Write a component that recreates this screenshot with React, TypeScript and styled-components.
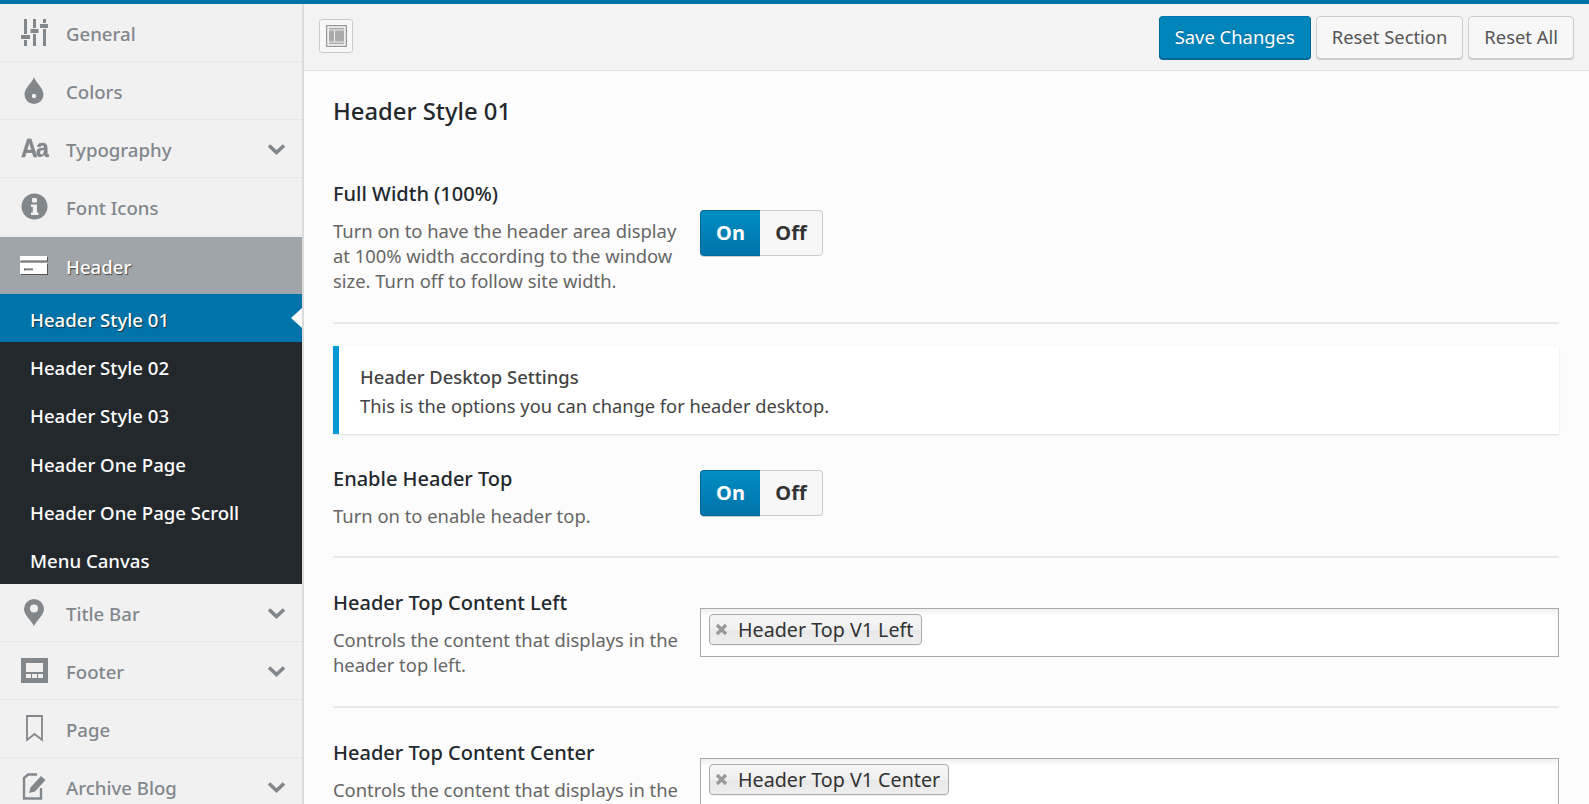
import React from "react";
import styled, { createGlobalStyle } from "styled-components";

const GlobalStyle = createGlobalStyle`
  html, body {
    margin: 0;
    padding: 0;
    height: 100%;
    overflow: hidden;
    background: #fcfcfc;
  }
  * {
    box-sizing: border-box;
  }
  #root {
    height: 100%;
  }
`;

const font = `"Noto Sans", "Open Sans", sans-serif`;

const Chevron = () => (
  <svg width="19" height="12" viewBox="0 0 19 12" fill="none">
    <path d="M2 2.5l7.500 7 7.500-7" stroke="#82878c" strokeWidth="3.6" />
  </svg>
);

const GeneralIcon = () => (
  <svg width="27" height="27" viewBox="0 0 27 27" fill="#82878c">
    <path d="M3 0h3v15H3zM3 21h3v6H3zM0 16h9v4H0zM12 0h3v9h-3zM12 15h3v12h-3zM9.5 10h8v4h-8zM22 0h3v4h-3zM22 10h3v17h-3zM19 5h8v4h-8z" />
  </svg>
);

const DropIcon = () => (
  <svg width="20" height="27" viewBox="0 0 20 27" fill="#82878c">
    <path d="M10 0c1 5 9.500 10.500 9.500 17.500A9.500 9.500 0 0 1 .5 17.500C.5 10.500 9 5 10 0z" />
    <circle cx="10" cy="19" r="2.2" fill="#f1f1f1" />
  </svg>
);

const AaIcon = () => <AaGlyph>Aa</AaGlyph>;

const InfoIcon = () => (
  <svg width="27" height="27" viewBox="0 0 27 27">
    <circle cx="13.5" cy="13.5" r="13" fill="#82878c" />
    <rect x="11" y="5" width="5" height="4.5" rx="1" fill="#f1f1f1" />
    <path d="M10 11.500h6v8h1.500V22h-7.500v-2.500h1.800v-5.500H10z" fill="#f1f1f1" />
  </svg>
);

const HeaderIcon = () => (
  <svg width="28" height="19" viewBox="0 0 28 19" fill="#fff" style={{ filter: "drop-shadow(1px 1px 0 #555)" }}>
    <path d="M0 0h27v4.500H0zM0 7h27v11H0zM4 12.500v2h9v-2z" fillRule="evenodd" />
  </svg>
);

const PinIcon = () => (
  <svg width="20" height="27" viewBox="0 0 20 27">
    <path d="M10 0a10 10 0 0 1 10 10c0 6-7 11-10 17C7 21 0 16 0 10A10 10 0 0 1 10 0z" fill="#82878c" />
    <circle cx="10" cy="9.5" r="4" fill="#f1f1f1" />
  </svg>
);

const FooterIcon = () => (
  <svg width="27" height="25" viewBox="0 0 27 25" fill="#82878c">
    <path
      d="M0 0h27v25H0zM5 5v9h17V5zM5 16v4h5v-4zM11 16v4h5v-4zM17 16v4h5v-4z"
      fillRule="evenodd"
    />
  </svg>
);

const BookmarkIcon = () => (
  <svg width="17" height="27" viewBox="0 0 17 27" fill="none">
    <path d="M1 1h15v24l-7.500-6L1 25z" stroke="#82878c" strokeWidth="1.8" />
  </svg>
);

const EditIcon = () => (
  <svg width="24" height="27" viewBox="0 0 24 27" fill="none">
    <path d="M19 15v10.500H2V5l4-3.500h9" stroke="#82878c" strokeWidth="2.4" />
    <path d="M7 20l1.500-5.500L19 3l4.500 4L13 18.500z" fill="#82878c" />
  </svg>
);

const ScreenOptionsIcon = () => (
  <svg width="21" height="22" viewBox="0 0 21 22">
    <rect x="0.5" y="0.5" width="20" height="21" fill="#eee" stroke="#999" strokeWidth="1.4" />
    <rect x="3" y="3" width="15" height="1.5" fill="#aaa" />
    <rect x="3" y="5.5" width="5" height="11" fill="#aaa" />
    <rect x="9" y="5.5" width="9" height="11" fill="#aaa" />
    <rect x="3" y="17.5" width="15" height="1.5" fill="#aaa" />
  </svg>
);

type Item = {
  label: string;
  icon: React.ReactNode;
  chevron?: boolean;
};

const topItems: Item[] = [
  { label: "General", icon: <GeneralIcon /> },
  { label: "Colors", icon: <DropIcon /> },
  { label: "Typography", icon: <AaIcon />, chevron: true },
  { label: "Font Icons", icon: <InfoIcon /> },
];

const subItems = [
  "Header Style 01",
  "Header Style 02",
  "Header Style 03",
  "Header One Page",
  "Header One Page Scroll",
  "Menu Canvas",
];

const bottomItems: Item[] = [
  { label: "Title Bar", icon: <PinIcon />, chevron: true },
  { label: "Footer", icon: <FooterIcon />, chevron: true },
  { label: "Page", icon: <BookmarkIcon /> },
  { label: "Archive Blog", icon: <EditIcon />, chevron: true },
];

function NavRow({ item }: { item: Item }) {
  return (
    <NavItem>
      <NavIcon>{item.icon}</NavIcon>
      <NavLabel>{item.label}</NavLabel>
      {item.chevron && (
        <ChevronSlot>
          <Chevron />
        </ChevronSlot>
      )}
    </NavItem>
  );
}

function Toggle() {
  return (
    <Switch>
      <SwitchOn>On</SwitchOn>
      <SwitchOff>Off</SwitchOff>
    </Switch>
  );
}

function Select({ value }: { value: string }) {
  return (
    <SelectBox>
      <Chip>
        <ChipRemove>
          <svg width="13" height="13" viewBox="0 0 13 13">
            <path d="M2 2l9 9M11 2l-9 9" stroke="#999" strokeWidth="3.2" />
          </svg>
        </ChipRemove>
        {value}
      </Chip>
    </SelectBox>
  );
}

export default function App() {
  return (
    <>
      <GlobalStyle />
      <Page>
        <Sidebar>
          {topItems.map((item) => (
            <NavRow key={item.label} item={item} />
          ))}
          <ActiveItem>
            <NavIcon>
              <HeaderIcon />
            </NavIcon>
            <ActiveLabel>Header</ActiveLabel>
          </ActiveItem>
          <SubMenu>
            {subItems.map((label, i) => (
              <SubItem key={label} $active={i === 0}>
                {label}
              </SubItem>
            ))}
          </SubMenu>
          {bottomItems.map((item) => (
            <NavRow key={item.label} item={item} />
          ))}
        </Sidebar>
        <Main>
          <Toolbar>
            <ExpandButton>
              <ScreenOptionsIcon />
            </ExpandButton>
            <ToolbarActions>
              <PrimaryButton>Save Changes</PrimaryButton>
              <SecondaryButton>Reset Section</SecondaryButton>
              <SecondaryButton>Reset All</SecondaryButton>
            </ToolbarActions>
          </Toolbar>
          <Content>
            <SectionTitle>Header Style 01</SectionTitle>
            <Field $first>
              <FieldText>
                <FieldTitle>Full Width (100%)</FieldTitle>
                <FieldDesc>
                  Turn on to have the header area display at 100% width according to the window
                  size. Turn off to follow site width.
                </FieldDesc>
              </FieldText>
              <SwitchCell>
                <Toggle />
              </SwitchCell>
            </Field>
            <Notice>
              <NoticeTitle>Header Desktop Settings</NoticeTitle>
              <NoticeText>This is the options you can change for header desktop.</NoticeText>
            </Notice>
            <Field $compact>
              <FieldText>
                <FieldTitle>Enable Header Top</FieldTitle>
                <FieldDesc>Turn on to enable header top.</FieldDesc>
              </FieldText>
              <SwitchCell>
                <Toggle />
              </SwitchCell>
            </Field>
            <Field>
              <FieldText>
                <FieldTitle>Header Top Content Left</FieldTitle>
                <FieldDesc>Controls the content that displays in the header top left.</FieldDesc>
              </FieldText>
              <SelectCell>
                <Select value="Header Top V1 Left" />
              </SelectCell>
            </Field>
            <Field>
              <FieldText>
                <FieldTitle>Header Top Content Center</FieldTitle>
                <FieldDesc>Controls the content that displays in the header top center.</FieldDesc>
              </FieldText>
              <SelectCell>
                <Select value="Header Top V1 Center" />
              </SelectCell>
            </Field>
          </Content>
        </Main>
      </Page>
    </>
  );
}

const Page = styled.div`
  height: 100vh;
  overflow: hidden;
  display: flex;
  align-items: flex-start;
  border-top: 4px solid #0073aa;
  font-family: ${font};
  background: #fcfcfc;
`;

const Sidebar = styled.nav`
  flex: 0 0 304px;
  width: 304px;
  height: 100%;
  background: #f1f1f1;
  border-right: 2px solid #dcdcdc;
  overflow: hidden;
`;

const NavItem = styled.div`
  height: 58px;
  display: flex;
  align-items: center;
  border-bottom: 1px solid #e7e7e7;
  color: #82878c;
`;

const ActiveItem = styled(NavItem)`
  height: 57px;
  margin-top: 1px;
  background: #a0a5aa;
  border-bottom: 0;
`;

const NavIcon = styled.span`
  flex: 0 0 66px;
  width: 66px;
  display: flex;
  justify-content: center;
  padding-left: 2px;
  align-items: center;
`;

const AaGlyph = styled.span`
  font-family: "Liberation Sans", sans-serif;
  font-size: 25px;
  font-weight: 700;
  letter-spacing: -2px;
  color: #82878c;
  -webkit-text-stroke: 0.4px #82878c;
  transform: scaleX(0.92);
`;

const NavLabel = styled.span`
  flex: 1;
  padding-top: 2px;
  font-size: 18.6px;
  font-weight: 500;
`;

const ActiveLabel = styled(NavLabel)`
  color: #fff;
  text-shadow: 1px 1px 1px #444;
`;

const ChevronSlot = styled.span`
  flex: 0 0 auto;
  display: flex;
  margin-right: 16px;
`;

const SubMenu = styled.div`
  background: #23282d;
  height: 290px;
`;

const SubItem = styled.div<{ $active?: boolean }>`
  position: relative;
  height: 48.33px;
  display: flex;
  align-items: center;
  padding: 2px 0 0 30px;
  font-size: 18.6px;
  font-weight: 500;
  color: #fff;
  background: ${(p) => (p.$active ? "#0073aa" : "transparent")};
  text-shadow: ${(p) => (p.$active ? "1px 1px 1px #12384a" : "none")};

  &::after {
    content: "";
    display: ${(p) => (p.$active ? "block" : "none")};
    position: absolute;
    right: 0;
    top: 50%;
    margin-top: -10px;
    border: 10px solid transparent;
    border-left-width: 0;
    border-right: 11px solid #fcfcfc;
  }
`;

const Main = styled.main`
  flex: 1;
  min-width: 0;
  height: 100%;
  display: flex;
  flex-direction: column;
`;

const Toolbar = styled.div`
  flex: 0 0 67px;
  display: flex;
  align-items: center;
  justify-content: space-between;
  padding: 0 15px;
  background: #f3f3f3;
  border-bottom: 1px solid #dedede;
`;

const ExpandButton = styled.button`
  width: 34px;
  height: 34px;
  margin-bottom: 2px;
  padding: 0;
  display: flex;
  align-items: center;
  justify-content: center;
  border: 1px solid #c9c9c9;
  border-radius: 3px;
  background: #f7f7f7;
`;

const ToolbarActions = styled.div`
  display: flex;
  gap: 5px;
`;

const SecondaryButton = styled.button`
  height: 43px;
  padding: 0 15px 1px;
  font-family: ${font};
  font-size: 18.4px;
  color: #555;
  background: #f7f7f7;
  border: 1px solid #ccc;
  border-radius: 4px;
  box-shadow: 0 1px 0 #ccc;
`;

const PrimaryButton = styled(SecondaryButton)`
  color: #fff;
  background: #0085ba;
  border-color: #0073aa #006799 #006799;
  box-shadow: 0 1px 0 #006799;
  text-shadow: 0 -1px 1px #006799;
`;

const Content = styled.div`
  flex: 1;
  padding: 0 30px 0 29px;
`;

const SectionTitle = styled.h2`
  margin: 0;
  padding-top: 24px;
  height: 94px;
  font-size: 23.8px;
  line-height: 32px;
  font-weight: 500;
  color: #23282d;
`;

const Field = styled.div<{ $first?: boolean; $compact?: boolean }>`
  display: grid;
  grid-template-columns: 367px 1fr;
  padding: ${(p) => (p.$first ? "16px 0 29px" : p.$compact ? "32px 0 28px" : "32px 0 29px")};
  border-bottom: 2px solid #e8e8e8;
`;

const FieldText = styled.div`
  display: flex;
  flex-direction: column;
  gap: 11.5px;
`;

const FieldTitle = styled.div`
  font-size: 20px;
  line-height: 25px;
  font-weight: 500;
  color: #23282d;
`;

const FieldDesc = styled.div`
  width: 350px;
  font-size: 18.4px;
  line-height: 25.3px;
  color: #666;
`;

const SwitchCell = styled.div`
  align-self: center;
  margin-bottom: 9px;
`;

const SelectCell = styled.div`
  margin-top: 18px;
`;

const Switch = styled.div`
  display: inline-flex;
  height: 46px;
  font-size: 20px;
  font-weight: 700;
`;

const SwitchOn = styled.span`
  width: 60px;
  display: flex;
  align-items: center;
  justify-content: center;
  color: #fff;
  background: linear-gradient(#008ec2, #0073aa);
  border: 1px solid #006799;
  border-right: 0;
  border-radius: 4px 0 0 4px;
  box-shadow: 0 1px 0 #ccc;
`;

const SwitchOff = styled.span`
  width: 63px;
  display: flex;
  align-items: center;
  justify-content: center;
  color: #333;
  background: #f7f7f7;
  border: 1px solid #ccc;
  border-left: 0;
  border-radius: 0 4px 4px 0;
`;

const Notice = styled.div`
  margin-top: 22px;
  height: 88px;
  display: flex;
  flex-direction: column;
  justify-content: center;
  gap: 4px;
  padding: 2px 0 0 21px;
  background: #fff;
  border-left: 6px solid #0099d5;
  box-shadow: 0 1px 2px rgba(0, 0, 0, 0.12);
`;

const NoticeTitle = styled.div`
  font-size: 18.4px;
  line-height: 25px;
  font-weight: 500;
  color: #444;
`;

const NoticeText = styled.div`
  font-size: 18.3px;
  line-height: 25px;
  color: #444;
`;

const SelectBox = styled.div`
  height: 49px;
  padding: 5px 8px;
  border: 1px solid #aaa;
  background: linear-gradient(#eee 0, #fff 15%);
`;

const Chip = styled.span`
  display: inline-flex;
  align-items: center;
  height: 31px;
  padding: 0 8px 0 5px;
  font-size: 19.7px;
  color: #333;
  border: 1px solid #aaa;
  border-radius: 4px;
  background: linear-gradient(#f4f4f4 20%, #f0f0f0 50%, #e8e8e8 52%, #eee);
  box-shadow: 0 1px 0 rgba(0, 0, 0, 0.05);
`;

const ChipRemove = styled.span`
  display: inline-flex;
  margin-right: 10px;
`;
